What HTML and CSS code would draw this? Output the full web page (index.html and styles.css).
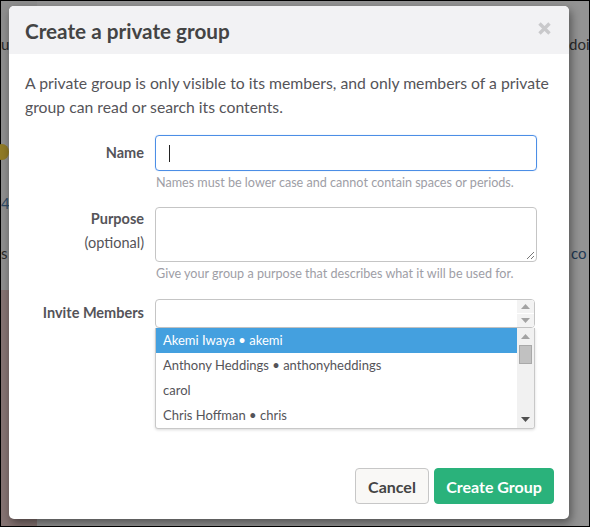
FILE: index.html
```html
<!DOCTYPE html>
<html>
<head>
<meta charset="utf-8">
<link rel="stylesheet" href="styles.css">
</head>
<body>
<div class="screen">
  <div class="backdrop">
    <div class="bd-left">
      <div class="bd-left-top"></div>
      <div class="bd-left-bottom"></div>
    </div>
    <div class="bd-rest"></div>
    <span class="frag f-u">u</span>
    <span class="frag f-doi">doi</span>
    <span class="frag f-emoji"></span>
    <span class="frag f-4">4</span>
    <span class="frag f-s">s</span>
    <span class="frag f-com">co</span>
  </div>

  <div class="modal">
    <div class="modal-header">
      <h1 class="modal-title">Create a private group</h1>
      <svg class="close" width="13" height="13" viewBox="0 0 13 13"><path d="M1.5 1.5 L11.5 11.5 M11.5 1.5 L1.5 11.5" stroke="#c9c9cb" stroke-width="3.4" stroke-linecap="butt"/></svg>
    </div>
    <div class="modal-body">
      <p class="desc">A private group is only visible to its members, and only members of a private group can read or search its contents.</p>
      <div class="form">
        <div class="row">
          <div class="label label-name">Name</div>
          <div class="field">
            <div class="input input-focus"><span class="caret"></span></div>
            <div class="help">Names must be lower case and cannot contain spaces or periods.</div>
          </div>
        </div>
        <div class="row">
          <div class="label label-purpose">Purpose<br><span class="opt">(optional)</span></div>
          <div class="field">
            <div class="textarea">
              <svg class="grip" width="9" height="9" viewBox="0 0 9 9"><path d="M8 1 L1 8 M8 5 L5 8" stroke="#777" stroke-width="1"/></svg>
            </div>
            <div class="help">Give your group a purpose that describes what it will be used for.</div>
          </div>
        </div>
        <div class="row row-invite">
          <div class="label label-invite">Invite Members</div>
          <div class="field field-select">
            <div class="select">
              <div class="select-space"></div>
              <div class="spin">
                <div class="spin-btn"><svg width="9" height="5" viewBox="0 0 9 5"><path d="M4.5 0 L9 5 L0 5 Z" fill="#a3a3a3"/></svg></div>
                <div class="spin-btn"><svg width="9" height="5" viewBox="0 0 9 5"><path d="M0 0 L9 0 L4.5 5 Z" fill="#a3a3a3"/></svg></div>
              </div>
            </div>
            <div class="dropdown">
              <ul class="options">
                <li class="opt-item active">Akemi Iwaya • akemi</li>
                <li class="opt-item">Anthony Heddings • anthonyheddings</li>
                <li class="opt-item">carol</li>
                <li class="opt-item">Chris Hoffman • chris</li>
              </ul>
              <div class="scrollbar">
                <div class="sb-arrow"><svg width="9" height="5" viewBox="0 0 9 5"><path d="M4.5 0 L9 5 L0 5 Z" fill="#a3a3a3"/></svg></div>
                <div class="sb-track"><div class="sb-thumb"></div></div>
                <div class="sb-arrow"><svg width="9" height="5" viewBox="0 0 9 5"><path d="M0 0 L9 0 L4.5 5 Z" fill="#505050"/></svg></div>
              </div>
            </div>
          </div>
        </div>
      </div>
    </div>
    <div class="modal-footer">
      <button class="btn btn-cancel">Cancel</button>
      <button class="btn btn-primary">Create Group</button>
    </div>
  </div>
</div>
</body>
</html>
```

FILE: styles.css
```css
* { box-sizing: border-box; }
html, body { margin: 0; padding: 0; }
body {
  width: 590px;
  height: 527px;
  overflow: hidden;
  font-family: Lato, "Open Sans", sans-serif;
}
.screen {
  position: relative;
  width: 590px;
  height: 527px;
  border: 1px solid #000;
  background: #949494;
}
.backdrop {
  display: flex;
  width: 100%;
  height: 100%;
}
.bd-left {
  width: 36px;
  display: flex;
  flex-direction: column;
}
.bd-left-top { height: 289px; background: #8e8e8e; }
.bd-left-bottom { flex: 1; background: #857372; }
.bd-rest { flex: 1; background: #939393; }
.frag {
  position: absolute;
  font-size: 15px;
  color: #2a2a2a;
  font-family: Lato, sans-serif;
}
.f-u { left: 0; top: 34px; }
.f-doi { left: 568px; top: 34px; }
.f-emoji { left: -6px; top: 143px; width: 14px; height: 16px; border-radius: 50%; background: #8f7a26; }
.f-4 { left: 0; top: 193px; color: #2d4a66; }
.f-s { left: 0; top: 243px; }
.f-com { left: 570px; top: 243px; color: #1f3a55; }

.modal {
  position: absolute;
  left: 8px;
  top: 5px;
  width: 560px;
  height: 513px;
  background: #fff;
  border-radius: 5px;
  box-shadow: 2px 4px 10px rgba(0,0,0,0.45);
  display: flex;
  flex-direction: column;
  overflow: hidden;
}
.modal-header {
  height: 48px;
  background: #f2f2f4;
  display: flex;
  align-items: center;
  justify-content: space-between;
  padding: 0 18px 0 16px;
}
.modal-title {
  margin: 0;
  font-size: 20.7px;
  font-weight: 700;
  color: #444;
  line-height: 24px;
  padding-top: 2px;
}
.close { margin-top: -4px; }

.modal-body {
  padding: 17px 16px 0 16px;
  flex: 1;
}
.desc {
  margin: 0 0 16px 0;
  font-size: 15.75px;
  line-height: 24px;
  color: #555459;
}
.form { padding-right: 16px; }
.row {
  display: grid;
  grid-template-columns: 119px 1fr;
  column-gap: 11px;
  margin-bottom: 15px;
}
.row-invite { padding-top: 1px; }
.label {
  text-align: right;
  font-size: 14.5px;
  font-weight: 700;
  color: #555459;
  line-height: 24px;
}
.label-name { padding-top: 6px; }
.label-purpose { padding-top: 0; }
.label-invite { padding-top: 2px; }
.opt { font-weight: 400; }

.input {
  height: 36px;
  border: 1px solid #c5c5c5;
  border-radius: 4px;
  position: relative;
}
.input-focus {
  border-color: #4c8ee6;
  box-shadow: 0 0 1px rgba(76,142,230,0.5);
}
.caret {
  position: absolute;
  left: 13px;
  top: 9px;
  width: 1px;
  height: 17px;
  background: #222;
}
.help {
  margin-top: 3px;
  font-size: 12.6px;
  line-height: 18px;
  color: #9e9ea6;
  padding-left: 1px;
}
.textarea {
  height: 55px;
  border: 1px solid #c5c5c5;
  border-radius: 4px;
  position: relative;
}
.grip { position: absolute; right: 1px; bottom: 1px; }

.field-select { width: 380px; }
.select {
  height: 29px;
  border: 1px solid #c5c5c5;
  border-radius: 4px;
  display: flex;
  overflow: hidden;
}
.select-space { flex: 1; }
.spin {
  width: 17px;
  display: flex;
  flex-direction: column;
  gap: 1px;
  background: #fff;
}
.spin-btn {
  flex: 1;
  background: #f3f3f3;
  display: flex;
  align-items: center;
  justify-content: center;
}
.dropdown {
  height: 101px;
  border: 1px solid #c8c8c8;
  border-top: none;
  border-radius: 0 0 3px 3px;
  box-shadow: 0 1px 3px rgba(0,0,0,0.15);
  display: flex;
  overflow: hidden;
}
.options {
  list-style: none;
  margin: 0;
  padding: 0;
  flex: 1;
}
.opt-item {
  height: 25px;
  line-height: 25px;
  padding-left: 7px;
  font-size: 13px;
  color: #555459;
}
.opt-item.active {
  background: #44a0df;
  color: #fff;
}
.scrollbar {
  width: 17px;
  background: #f1f1f1;
  display: flex;
  flex-direction: column;
}
.sb-arrow {
  height: 17px;
  display: flex;
  align-items: center;
  justify-content: center;
}
.sb-track { flex: 1; padding: 0 2px; }
.sb-thumb {
  height: 19px;
  background: #c1c1c1;
  border: 1px solid #a9a9a9;
}

.modal-footer {
  display: flex;
  justify-content: flex-end;
  gap: 5px;
  padding: 0 15px 15px 0;
}
.btn {
  height: 36px;
  border-radius: 4px;
  font-family: Lato, sans-serif;
  font-size: 16px;
  font-weight: 700;
  cursor: pointer;
}
.btn-cancel {
  width: 74px;
  background: #f9f8f6;
  border: 1px solid #c7c7c7;
  color: #444;
}
.btn-primary {
  width: 120px;
  background: #2ab27b;
  border: 1px solid #2ab27b;
  color: #fff;
}
```
